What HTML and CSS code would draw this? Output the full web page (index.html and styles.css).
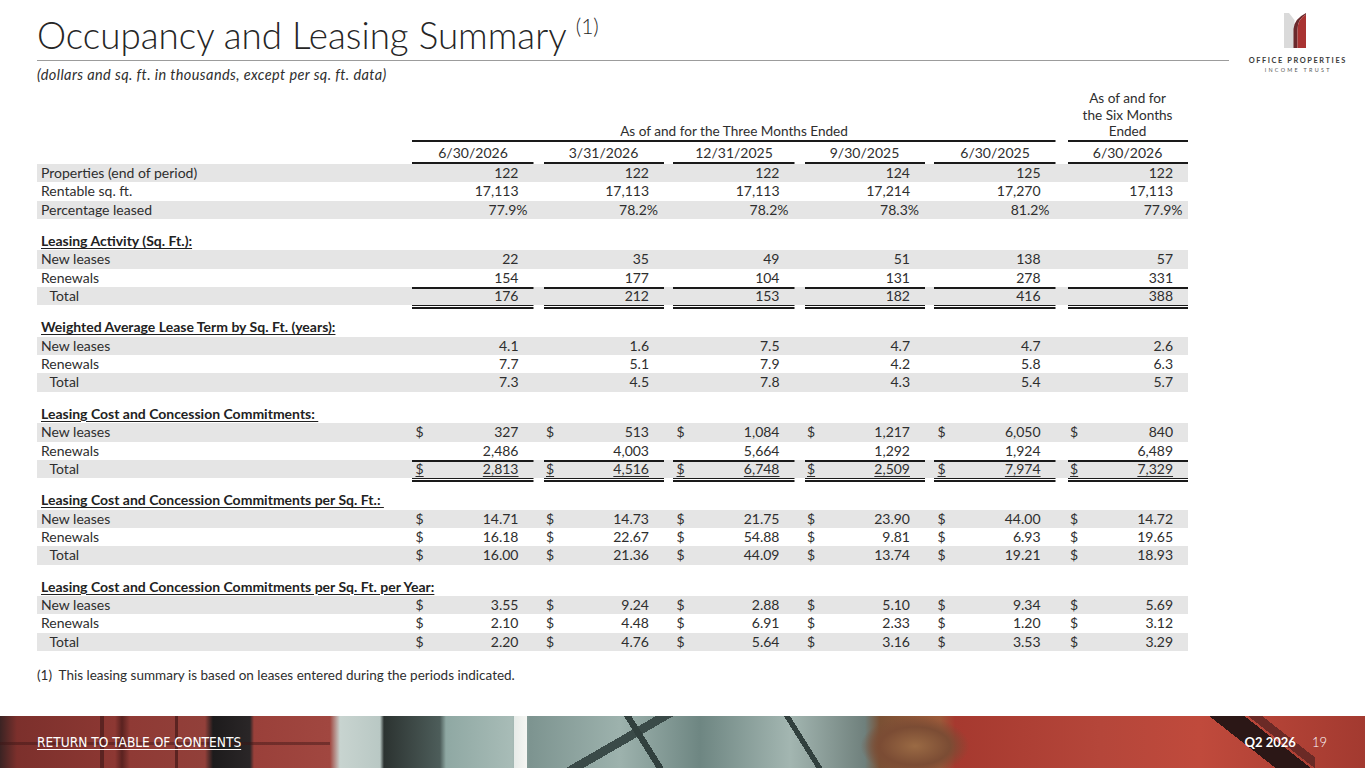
FILE: index.html
```html
<!DOCTYPE html>
<html lang="en">
<head>
<meta charset="utf-8">
<title>Occupancy and Leasing Summary</title>
<link rel="stylesheet" href="styles.css">
</head>
<body>
<div class="slide">
  <header class="top">
    <div class="head">
      <h1 class="title">Occupancy and Leasing Summary <sup>(1)</sup></h1>
      <div class="rule"></div>
      <p class="subtitle">(dollars and sq. ft. in thousands, except per sq. ft. data)</p>
    </div>
    <div class="logo">
      <svg viewBox="0 0 22 35" width="22" height="35" aria-hidden="true">
        <path d="M0 0 H5 L10.5 7 V35 H0 Z" fill="#dadada"/>
        <path d="M22 0 Q10 6 9.5 16 V35 H13.5 V17 Q13.5 6 22 1.5 Z" fill="#6a2a2d"/>
        <path d="M22 1.5 Q13.5 6 13.5 17 V35 H22 Z" fill="#a93332"/>
      </svg>
      <div class="l1">OFFICE PROPERTIES</div>
      <div class="l2">INCOME TRUST</div>
    </div>
  </header>

  <table class="grid">
    <colgroup>
      <col class="c-lbl"><col class="c-n"><col class="c-n"><col class="c-n"><col class="c-n"><col class="c-n"><col class="c-last">
    </colgroup>
    <thead>
      <tr class="h1">
        <th></th>
        <th colspan="5" class="ul">As of and for the Three Months Ended</th>
        <th class="ul six">As of and for<br>the Six Months<br>Ended</th>
      </tr>
      <tr class="h2">
        <th></th>
        <th class="ul">6/30/2026</th>
        <th class="ul">3/31/2026</th>
        <th class="ul">12/31/2025</th>
        <th class="ul">9/30/2025</th>
        <th class="ul">6/30/2025</th>
        <th class="ul">6/30/2026</th>
      </tr>
    </thead>
    <tbody>
      <tr class="s"><td class="lbl">Properties (end of period)</td><td>122</td><td>122</td><td>122</td><td>124</td><td>125</td><td>122</td></tr>
      <tr><td class="lbl">Rentable sq. ft.</td><td>17,113</td><td>17,113</td><td>17,113</td><td>17,214</td><td>17,270</td><td>17,113</td></tr>
      <tr class="s"><td class="lbl">Percentage leased</td><td class="p">77.9%</td><td class="p">78.2%</td><td class="p">78.2%</td><td class="p">78.3%</td><td class="p">81.2%</td><td class="p">77.9%</td></tr>

      <tr class="sec"><td class="lbl"><span class="h">Leasing Activity (Sq. Ft.):</span></td><td></td><td></td><td></td><td></td><td></td><td></td></tr>
      <tr class="s"><td class="lbl">New leases</td><td>22</td><td>35</td><td>49</td><td>51</td><td>138</td><td>57</td></tr>
      <tr><td class="lbl">Renewals</td><td>154</td><td>177</td><td>104</td><td>131</td><td>278</td><td>331</td></tr>
      <tr class="s tot"><td class="lbl ind">Total</td><td>176</td><td>212</td><td>153</td><td>182</td><td>416</td><td>388</td></tr>

      <tr class="sec dbl"><td class="lbl"><span class="h">Weighted Average Lease Term by Sq. Ft. (years):</span></td><td></td><td></td><td></td><td></td><td></td><td></td></tr>
      <tr class="s"><td class="lbl">New leases</td><td>4.1</td><td>1.6</td><td>7.5</td><td>4.7</td><td>4.7</td><td>2.6</td></tr>
      <tr><td class="lbl">Renewals</td><td>7.7</td><td>5.1</td><td>7.9</td><td>4.2</td><td>5.8</td><td>6.3</td></tr>
      <tr class="s"><td class="lbl ind">Total</td><td>7.3</td><td>4.5</td><td>7.8</td><td>4.3</td><td>5.4</td><td>5.7</td></tr>

      <tr class="sec"><td class="lbl"><span class="h">Leasing Cost and Concession Commitments:&nbsp;</span></td><td></td><td></td><td></td><td></td><td></td><td></td></tr>
      <tr class="s"><td class="lbl">New leases</td><td><span class="c">$</span>327</td><td><span class="c">$</span>513</td><td><span class="c">$</span>1,084</td><td><span class="c">$</span>1,217</td><td><span class="c">$</span>6,050</td><td><span class="c">$</span>840</td></tr>
      <tr><td class="lbl">Renewals</td><td>2,486</td><td>4,003</td><td>5,664</td><td>1,292</td><td>1,924</td><td>6,489</td></tr>
      <tr class="s tot u"><td class="lbl ind">Total</td><td><span class="c">$</span><span class="t">2,813</span></td><td><span class="c">$</span><span class="t">4,516</span></td><td><span class="c">$</span><span class="t">6,748</span></td><td><span class="c">$</span><span class="t">2,509</span></td><td><span class="c">$</span><span class="t">7,974</span></td><td><span class="c">$</span><span class="t">7,329</span></td></tr>

      <tr class="sec dbl"><td class="lbl"><span class="h">Leasing Cost and Concession Commitments per Sq. Ft.:&nbsp;</span></td><td></td><td></td><td></td><td></td><td></td><td></td></tr>
      <tr class="s"><td class="lbl">New leases</td><td><span class="c">$</span>14.71</td><td><span class="c">$</span>14.73</td><td><span class="c">$</span>21.75</td><td><span class="c">$</span>23.90</td><td><span class="c">$</span>44.00</td><td><span class="c">$</span>14.72</td></tr>
      <tr><td class="lbl">Renewals</td><td><span class="c">$</span>16.18</td><td><span class="c">$</span>22.67</td><td><span class="c">$</span>54.88</td><td><span class="c">$</span>9.81</td><td><span class="c">$</span>6.93</td><td><span class="c">$</span>19.65</td></tr>
      <tr class="s"><td class="lbl ind">Total</td><td><span class="c">$</span>16.00</td><td><span class="c">$</span>21.36</td><td><span class="c">$</span>44.09</td><td><span class="c">$</span>13.74</td><td><span class="c">$</span>19.21</td><td><span class="c">$</span>18.93</td></tr>

      <tr class="sec"><td class="lbl"><span class="h">Leasing Cost and Concession Commitments per Sq. Ft. per Year:</span></td><td></td><td></td><td></td><td></td><td></td><td></td></tr>
      <tr class="s"><td class="lbl">New leases</td><td><span class="c">$</span>3.55</td><td><span class="c">$</span>9.24</td><td><span class="c">$</span>2.88</td><td><span class="c">$</span>5.10</td><td><span class="c">$</span>9.34</td><td><span class="c">$</span>5.69</td></tr>
      <tr><td class="lbl">Renewals</td><td><span class="c">$</span>2.10</td><td><span class="c">$</span>4.48</td><td><span class="c">$</span>6.91</td><td><span class="c">$</span>2.33</td><td><span class="c">$</span>1.20</td><td><span class="c">$</span>3.12</td></tr>
      <tr class="s"><td class="lbl ind">Total</td><td><span class="c">$</span>2.20</td><td><span class="c">$</span>4.76</td><td><span class="c">$</span>5.64</td><td><span class="c">$</span>3.16</td><td><span class="c">$</span>3.53</td><td><span class="c">$</span>3.29</td></tr>
    </tbody>
  </table>

  <p class="footnote">(1)&nbsp; This leasing summary is based on leases entered during the periods indicated.</p>

  <footer class="band">
    <a class="toc" href="#">RETURN TO TABLE OF CONTENTS</a>
    <div class="page"><span class="q">Q2 2026</span><span class="num">19</span></div>
  </footer>
</div>
</body>
</html>
```

FILE: styles.css
```css
html, body {
  margin: 0;
  padding: 0;
  background: #ffffff;
}

body {
  font-family: Lato, "Open Sans", "Liberation Sans", sans-serif;
  color: #2e2e2e;
}

.slide {
  width: 1365px;
  height: 768px;
  display: flex;
  flex-direction: column;
  overflow: hidden;
}

/* ---------- header ---------- */
.top {
  display: flex;
}

.head {
  width: 1229px;
  padding-left: 37px;
  box-sizing: border-box;
}

.title {
  margin: 15px 0 0;
  font-weight: 300;
  font-size: 36.8px;
  line-height: 40px;
  color: #262626;
  white-space: nowrap;
}

.title sup {
  font-size: 21px;
  line-height: 0;
  vertical-align: 15px;
}

.rule {
  height: 1px;
  margin-top: 5px;
  background: #9c9c9c;
}

.subtitle {
  margin: 6px 0 0;
  font-style: italic;
  font-size: 14.5px;
  letter-spacing: 0.4px;
  line-height: 16px;
  color: #2e2e2e;
}

.logo {
  flex: 1;
  display: flex;
  flex-direction: column;
  align-items: center;
  padding-top: 13px;
}

.logo svg {
  display: block;
  margin-left: -5px;
}

.logo .l1 {
  margin-top: 8px;
  padding-left: 1.6px;
  font-size: 7.4px;
  line-height: 9px;
  font-weight: 700;
  letter-spacing: 1.6px;
  color: #3a3a3a;
  white-space: nowrap;
}

.logo .l2 {
  margin-top: 2px;
  padding-left: 2.3px;
  font-size: 5.4px;
  line-height: 7px;
  letter-spacing: 2.3px;
  color: #555555;
  white-space: nowrap;
}

/* ---------- table ---------- */
.grid {
  --line: #1a1a1a;
  margin: 7px 0 0 37px;
  width: 1151px;
  table-layout: fixed;
  border-collapse: collapse;
  font-size: 14px;
  color: #2e2e2e;
}

.c-lbl { width: 366px; }
.c-n { width: 130.5px; }
.c-last { width: 132.5px; }

.grid th,
.grid td {
  --gap: 9.5px;
  padding: 0;
  background-repeat: no-repeat;
}

.grid th:last-child,
.grid td:last-child {
  --gap: 11.5px;
}

.grid th {
  font-weight: 400;
  text-align: center;
  vertical-align: bottom;
  padding-left: var(--gap);
}

.grid th.ul {
  background-image: linear-gradient(var(--line), var(--line));
  background-size: calc(100% - var(--gap)) 2px;
  background-position: right bottom;
}

.h1 th {
  font-size: 13.6px;
  line-height: 16.5px;
  padding-bottom: 2px;
  white-space: nowrap;
}

.h2 th {
  line-height: 18.5px;
  padding-top: 2px;
  padding-bottom: 2px;
}

.grid td {
  height: 18.33px;
  line-height: 18.33px;
  text-align: right;
  white-space: nowrap;
  padding: 0 15px 0 calc(var(--gap) + 3px);
}

.grid td.p {
  padding-right: 6px;
}

.grid td:last-child.p {
  padding-right: 5.5px;
}

.grid td.lbl {
  text-align: left;
  padding: 0 0 0 4px;
  overflow: visible;
}

.grid td.ind {
  padding-left: 12.5px;
}

.c {
  float: left;
}

tr.s {
  background: #e5e5e5;
}

/* single line over totals */
tr.tot td:not(.lbl) {
  background-image: linear-gradient(var(--line), var(--line));
  background-size: calc(100% - var(--gap)) 2px;
  background-position: right top;
}

tr.u .c,
tr.u .t {
  text-decoration: underline;
  text-decoration-thickness: 1px;
  text-underline-offset: 2px;
}

/* section heading rows */
tr.sec td {
  height: 31.43px;
  vertical-align: bottom;
}

.h {
  font-weight: 700;
  color: #222222;
  text-decoration: underline;
  text-decoration-thickness: 1px;
  text-underline-offset: 2px;
}

/* double rule below totals */
tr.dbl td:not(.lbl) {
  background-image: linear-gradient(var(--line) 0 1.5px, transparent 1.5px 2.5px, var(--line) 2.5px 4px);
  background-size: calc(100% - var(--gap)) 4px;
  background-position: right top;
}

/* ---------- footnote ---------- */
.footnote {
  margin: 16px 0 0 37px;
  font-size: 13.5px;
  line-height: 16px;
  color: #2e2e2e;
}

/* ---------- footer band ---------- */
.band {
  margin-top: auto;
  height: 52px;
  display: flex;
  align-items: center;
  justify-content: space-between;
  padding: 0 38px 0 37px;
  box-sizing: border-box;
  color: #ffffff;
  background:
    /* lamp pole */
    linear-gradient(90deg, transparent 514px, #e6ebe8 514px, #f6f6f3 527px, transparent 527px),
    /* dark diagonal beam on right */
    linear-gradient(38deg, transparent 40%, #2b1716 40% 60%, transparent 60%) 1205px 0 / 110px 52px no-repeat,
    linear-gradient(38deg, transparent 62%, #6b2a26 62% 70%, transparent 70%) 1205px 0 / 110px 52px no-repeat,
    /* glass frame diagonals */
    linear-gradient(58deg, transparent 46%, #31403e 46% 52%, transparent 52%) 600px 0 / 90px 52px no-repeat,
    linear-gradient(58deg, transparent 46%, #31403e 46% 51%, transparent 51%) 760px 0 / 90px 52px no-repeat,
    linear-gradient(150deg, transparent 40%, #3a4a48 40% 46%, transparent 46%) 540px 0 / 200px 52px no-repeat,
    /* brick window mullions on the left */
    linear-gradient(90deg, transparent 100px, #5b2321 100px 104px, transparent 104px 175px, #5b2321 175px 178px, transparent 178px),
    linear-gradient(180deg, transparent 26px, rgba(60, 20, 20, 0.45) 26px 29px, transparent 29px) 0 0 / 330px 52px no-repeat,
    /* tree canopy */
    radial-gradient(ellipse at center, #9a6a44 0, #7b4c34 45%, transparent 70%) 860px 0 / 110px 60px no-repeat,
    /* base photo bands */
    linear-gradient(90deg,
      #3b2323 0, #7c302c 17px, #8d3833 115px, #5a2220 122px, #8f3a35 130px,
      #92403a 205px, #1d1b1c 213px, #2a2627 250px, #9a403a 254px,
      #a14740 330px, #c8d4d0 340px, #b9c8c4 380px, #2c3331 384px, #4d5d5a 440px,
      #8fa8a3 446px, #a8bcb7 512px, #7d9490 530px, #9db2ad 620px, #6e8682 700px,
      #a3b6b1 790px, #6f807c 865px, #7a5034 880px, #9c5a3a 940px,
      #a6392f 955px, #b5463a 1100px, #c04a3c 1200px, #a33a30 1365px);
}

.toc {
  font-family: "DejaVu Sans", "Liberation Sans", sans-serif;
  font-stretch: condensed;
  font-size: 13.6px;
  color: #ffffff;
  text-decoration: underline;
  text-decoration-thickness: 1px;
  text-underline-offset: 2px;
}

.page {
  display: flex;
  gap: 16px;
  font-size: 13px;
  line-height: 16px;
}

.page .q {
  font-weight: 700;
}

.page .num {
  font-weight: 300;
}
```
